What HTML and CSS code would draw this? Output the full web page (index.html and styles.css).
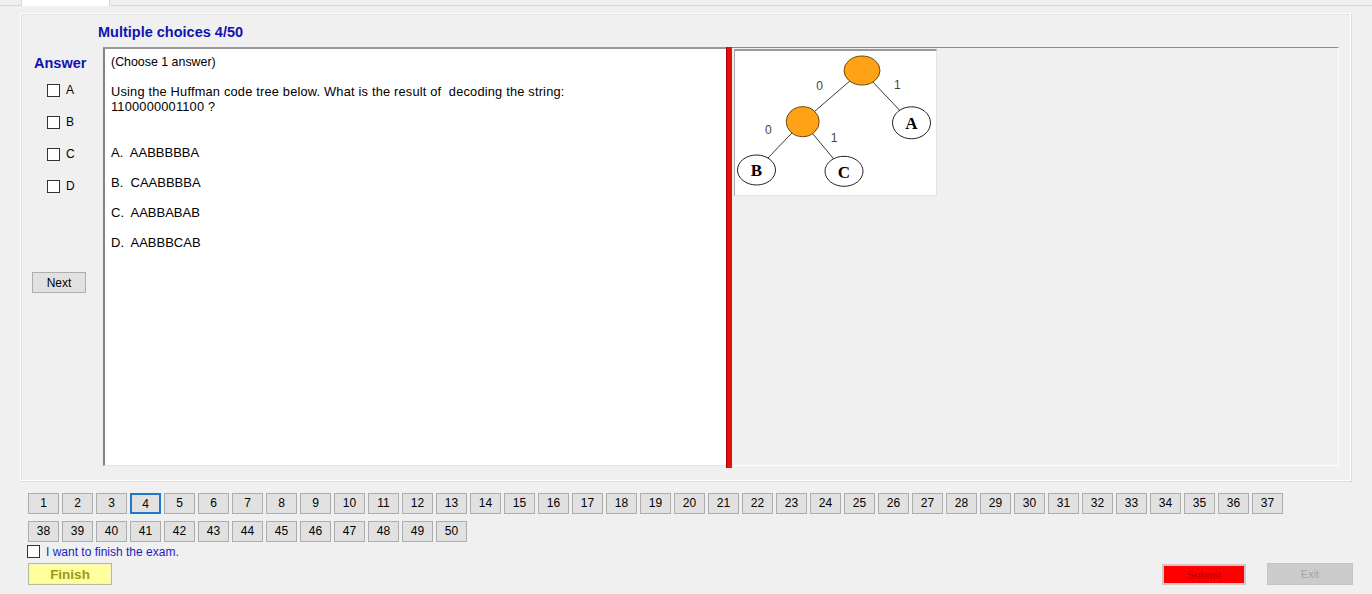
FILE: index.html
```html
<!DOCTYPE html>
<html>
<head>
<meta charset="utf-8">
<title>Exam</title>
<link rel="stylesheet" href="styles.css">
</head>
<body>
<div class="tabs"><div class="tab"></div></div>
<div class="group">
  <div class="title">Multiple choices 4/50</div>
  <div class="main">
    <div class="answers">
      <div class="answer-label">Answer</div>
      <div class="choice"><input type="checkbox" class="cb"><span>A</span></div>
      <div class="choice"><input type="checkbox" class="cb"><span>B</span></div>
      <div class="choice"><input type="checkbox" class="cb"><span>C</span></div>
      <div class="choice"><input type="checkbox" class="cb"><span>D</span></div>
      <button class="btn next">Next</button>
    </div>
    <div class="split">
      <div class="question">
        <div class="q-head">(Choose 1 answer)</div>
        <div class="q-text">Using the Huffman code tree below. What is the result of&nbsp; decoding the string:<br>1100000001100 ?</div>
        <div class="options">
          <div class="opt">A.&nbsp; AABBBBBA</div>
          <div class="opt">B.&nbsp; CAABBBBA</div>
          <div class="opt">C.&nbsp; AABBABAB</div>
          <div class="opt">D.&nbsp; AABBBCAB</div>
        </div>
      </div>
      <div class="splitter"></div>
      <div class="image-panel">
        <div class="picture">
          <svg width="200" height="144" viewBox="0 0 200 144" xmlns="http://www.w3.org/2000/svg">
            <g stroke="#3a3a3a" stroke-width="1">
              <line x1="127" y1="19.5" x2="67.7" y2="70.7"/>
              <line x1="127" y1="19.5" x2="176.5" y2="71.8"/>
              <line x1="67.7" y1="70.7" x2="21.5" y2="119"/>
              <line x1="67.7" y1="70.7" x2="109" y2="120.3"/>
            </g>
            <ellipse cx="127" cy="19.5" rx="18" ry="14.5" fill="#ffa216" stroke="#6a4a12" stroke-width="1"/>
            <ellipse cx="67.7" cy="70.7" rx="16.5" ry="15" fill="#ffa216" stroke="#6a4a12" stroke-width="1"/>
            <ellipse cx="176.5" cy="71.8" rx="19" ry="16" fill="#fff" stroke="#222" stroke-width="1"/>
            <ellipse cx="21.5" cy="119" rx="19" ry="15" fill="#fff" stroke="#222" stroke-width="1"/>
            <ellipse cx="109" cy="120.3" rx="19" ry="15" fill="#fff" stroke="#222" stroke-width="1"/>
            <g class="node-letter" text-anchor="middle">
              <text x="176.5" y="78">A</text>
              <text x="21.5" y="125">B</text>
              <text x="109" y="126.5">C</text>
            </g>
            <g class="edge-label" text-anchor="middle">
              <text x="84.7" y="39">0</text>
              <text x="162.3" y="38">1</text>
              <text x="33.3" y="83">0</text>
              <text x="99" y="90.5">1</text>
            </g>
          </svg>
        </div>
      </div>
    </div>
  </div>
</div>
<div class="nav">
  <button class="btn num">1</button><button class="btn num">2</button><button class="btn num">3</button><button class="btn num current">4</button><button class="btn num">5</button><button class="btn num">6</button><button class="btn num">7</button><button class="btn num">8</button><button class="btn num">9</button><button class="btn num">10</button><button class="btn num">11</button><button class="btn num">12</button><button class="btn num">13</button><button class="btn num">14</button><button class="btn num">15</button><button class="btn num">16</button><button class="btn num">17</button><button class="btn num">18</button><button class="btn num">19</button><button class="btn num">20</button><button class="btn num">21</button><button class="btn num">22</button><button class="btn num">23</button><button class="btn num">24</button><button class="btn num">25</button><button class="btn num">26</button><button class="btn num">27</button><button class="btn num">28</button><button class="btn num">29</button><button class="btn num">30</button><button class="btn num">31</button><button class="btn num">32</button><button class="btn num">33</button><button class="btn num">34</button><button class="btn num">35</button><button class="btn num">36</button><button class="btn num">37</button><button class="btn num">38</button><button class="btn num">39</button><button class="btn num">40</button><button class="btn num">41</button><button class="btn num">42</button><button class="btn num">43</button><button class="btn num">44</button><button class="btn num">45</button><button class="btn num">46</button><button class="btn num">47</button><button class="btn num">48</button><button class="btn num">49</button><button class="btn num">50</button>
</div>
<div class="finish-check"><input type="checkbox" class="cb"><span>I want to finish the exam.</span></div>
<div class="actions">
  <button class="finish">Finish</button>
  <div class="spacer"></div>
  <button class="submit">Submit</button>
  <button class="exit">Exit</button>
</div>
</body>
</html>
```
FILE: styles.css
```css
html, body {
  margin: 0;
  padding: 0;
}
body {
  width: 1372px;
  height: 594px;
  overflow: hidden;
  background: #f0f0f0;
  font-family: "Liberation Sans", Arial, sans-serif;
  font-size: 12px;
  color: #000;
}
.tabs {
  height: 5px;
  border-bottom: 1px solid #d9d9d9;
}
.tab {
  margin-left: 21px;
  width: 89px;
  height: 6px;
  box-sizing: border-box;
  background: #fff;
  border: 1px solid #d9d9d9;
  border-top: none;
  border-bottom: none;
}
.group {
  margin: 7px 21px 0 20px;
  height: 468px;
  box-sizing: border-box;
  border: 1px solid #fff;
  box-shadow: inset 1px 1px 0 #e2e2e2, 1px 1px 0 #dcdcdc;
  display: flex;
  flex-direction: column;
}
.title {
  margin: 10px 0 0 77px;
  font-weight: bold;
  font-size: 14.5px;
  line-height: 17px;
  color: #1212b0;
  height: 17px;
}
.main {
  display: flex;
  margin-top: 6px;
}
.answers {
  width: 82px;
  display: flex;
  flex-direction: column;
}
.answer-label {
  margin: 8px 0 0 13px;
  font-weight: bold;
  font-size: 14.5px;
  line-height: 17px;
  color: #1212b0;
}
.choice {
  height: 32px;
  display: flex;
  align-items: center;
  padding-left: 26px;
  font-size: 12px;
}
.answer-label + .choice {
  margin-top: 2px;
}
.cb {
  appearance: none;
  -webkit-appearance: none;
  margin: 0;
  width: 13px;
  height: 13px;
  border: 1px solid #333;
  background: #fff;
  box-sizing: border-box;
  flex: none;
}
.choice .cb {
  margin-right: 6px;
}
.btn {
  font-family: "Liberation Sans", Arial, sans-serif;
  font-size: 12px;
  color: #000;
  background: #e1e1e1;
  border: 1px solid #adadad;
  padding: 0;
  box-sizing: border-box;
}
.next {
  margin: 70px 0 0 11px;
  width: 54px;
  height: 21px;
}
.split {
  display: flex;
  width: 1236px;
  height: 419px;
}
.question {
  width: 623px;
  box-sizing: border-box;
  background: #fff;
  border-left: 2px solid #858585;
  border-top: 2px solid #999;
  border-bottom: 1px solid #e4e4e4;
  padding: 6px 0 0 6px;
  font-size: 12.4px;
  line-height: 15px;
}
.q-text {
  margin-top: 14px;
  font-size: 12.8px;
  letter-spacing: 0.2px;
}
.options {
  margin-top: 24px;
  font-size: 13px;
}
.opt {
  height: 30px;
  line-height: 30px;
}
.splitter {
  width: 6px;
  height: 421px;
  background: #ec0c0c;
  border-left: 1px solid #a00000;
  box-sizing: border-box;
}
.image-panel {
  flex: 1;
  box-sizing: border-box;
  border-top: 1px solid #8a8a8a;
  border-right: 1px solid #fff;
  border-bottom: 1px solid #fff;
  padding: 1px 0 0 2px;
}
.picture {
  width: 203px;
  height: 147px;
  box-sizing: border-box;
  background: #fff;
  border-top: 2px solid #9a9a9a;
  border-left: 1px solid #a8a8a8;
  border-right: 1px solid #e2e2e2;
  border-bottom: 1px solid #e2e2e2;
}
.picture svg {
  display: block;
}
.node-letter {
  font-family: "Liberation Serif", "Times New Roman", serif;
  font-weight: bold;
  font-size: 17px;
  fill: #000;
}
.edge-label {
  font-family: "Liberation Sans", Arial, sans-serif;
  font-size: 12px;
  fill: #444;
}
.nav {
  margin: 12px 0 0 28px;
  width: 1262px;
  display: flex;
  flex-wrap: wrap;
  column-gap: 3px;
  row-gap: 7px;
}
.num {
  width: 31px;
  height: 21px;
  line-height: 19px;
}
.num.current {
  border: 2px solid #1f78c8;
}
.finish-check {
  margin: 3px 0 0 27px;
  height: 13px;
  display: flex;
  align-items: center;
  color: #1c1cc0;
  font-size: 12px;
}
.finish-check .cb {
  margin-right: 6px;
}
.actions {
  margin-top: 5px;
  display: flex;
  align-items: flex-start;
  padding-left: 28px;
  padding-right: 19px;
}
.finish {
  width: 84px;
  height: 22px;
  background: #ffff9c;
  border: 1px solid #b8b8a8;
  box-shadow: inset 0 0 0 1px #f4f4c0;
  font-family: "Liberation Sans", Arial, sans-serif;
  font-weight: bold;
  font-size: 13.5px;
  color: #9a9a18;
  padding: 0;
}
.spacer {
  flex: 1;
}
.submit {
  margin-top: 1px;
  width: 84px;
  height: 21px;
  box-sizing: border-box;
  background: #ff0000;
  border: 2px solid #d0c8c8;
  font-family: "Liberation Sans", Arial, sans-serif;
  font-size: 11px;
  color: #b40000;
  padding: 0;
}
.exit {
  margin-left: 21px;
  width: 86px;
  height: 22px;
  box-sizing: border-box;
  background: #cccccc;
  border: 1px solid #c4c4c4;
  font-family: "Liberation Sans", Arial, sans-serif;
  font-size: 11px;
  color: #a6a6a6;
  padding: 0;
}
```
